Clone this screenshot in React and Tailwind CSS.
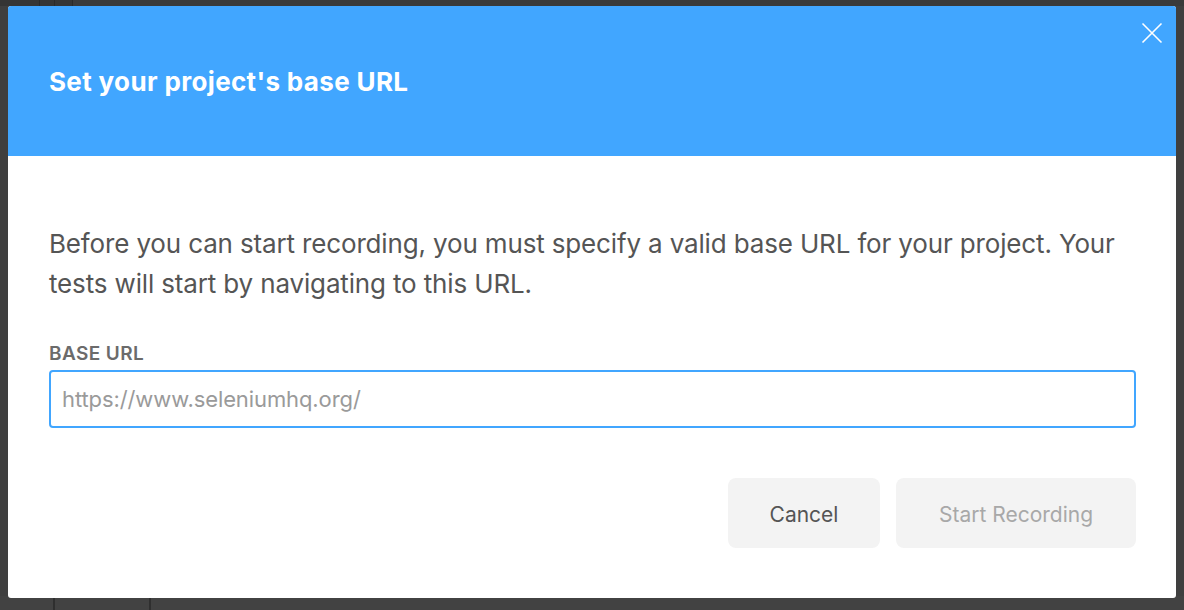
import React from "react";

export default function App() {
  return (
    <div
      className="relative w-[1184px] h-[610px] overflow-hidden bg-[#404040]"
      style={{ fontFamily: "Inter, 'Noto Sans', sans-serif" }}
    >
      {/* underlying app (dimmed) */}
      <div className="flex flex-col h-full">
        <div className="flex h-[6px] bg-[#353535]">
          <div className="w-[40px] border-r border-[#2a2a2a]" />
          <div className="w-[15px] border-r border-[#2a2a2a]" />
          <div className="w-[18px] border-r border-[#2a2a2a]" />
          <div className="flex-1 bg-[#3a3a3a]" />
        </div>
        <div className="flex-1 bg-[#3f3f3f]" />
        <div className="flex h-[14px] bg-[#424242]">
          <div className="w-[55px] border-r-2 border-[#2f2f2f]" />
          <div className="w-[96px] border-r-2 border-[#2f2f2f]" />
          <div className="flex-1" />
        </div>
      </div>

      {/* modal */}
      <div className="absolute left-[8px] top-[6px] w-[1168px] h-[592px] rounded-[3px] bg-white overflow-hidden flex flex-col">
        <div className="relative h-[150px] shrink-0 bg-[#41a6ff] flex items-center pl-[41px] pb-[1px]">
          <h1 className="text-[26px] font-bold text-white tracking-[0.35px] mt-[2px]">
            Set your project's base URL
          </h1>
          <button className="absolute right-[13px] top-[16px] w-[22px] h-[22px] flex items-center justify-center">
            <svg width="22" height="22" viewBox="0 0 22 22" fill="none" stroke="white" strokeWidth="1.6">
              <path d="M1.5 1.5 L20.5 20.5 M20.5 1.5 L1.5 20.5" />
            </svg>
          </button>
        </div>

        <div className="flex flex-col pl-[41px] pr-[40px] pt-[68px]">
          <p className="text-[26px] leading-[40px] text-[#555555] tracking-[-0.15px]">
            Before you can start recording, you must specify a valid base URL for your project. Your tests will start by navigating to this URL.
          </p>
          <label className="mt-[40px] text-[19px] leading-[20px] font-semibold text-[#6b6b6b] tracking-[0.4px]">
            BASE URL
          </label>
          <div className="mt-[6px] h-[58px] rounded-[4px] border-2 border-[#41a6ff] flex items-center px-[11px]">
            <span className="text-[22px] text-[#9a9a9a] tracking-[-0.1px]">https://www.seleniumhq.org/</span>
          </div>
          <div className="mt-[50px] flex justify-end gap-[16px]">
            <button className="w-[152px] h-[70px] rounded-[8px] bg-[#f3f3f3] text-[21px] text-[#555555] pt-[3px]">
              Cancel
            </button>
            <button className="w-[240px] h-[70px] rounded-[8px] bg-[#f3f3f3] text-[21px] text-[#a8a8a8] pt-[3px]">
              Start Recording
            </button>
          </div>
        </div>
      </div>
    </div>
  );
}
